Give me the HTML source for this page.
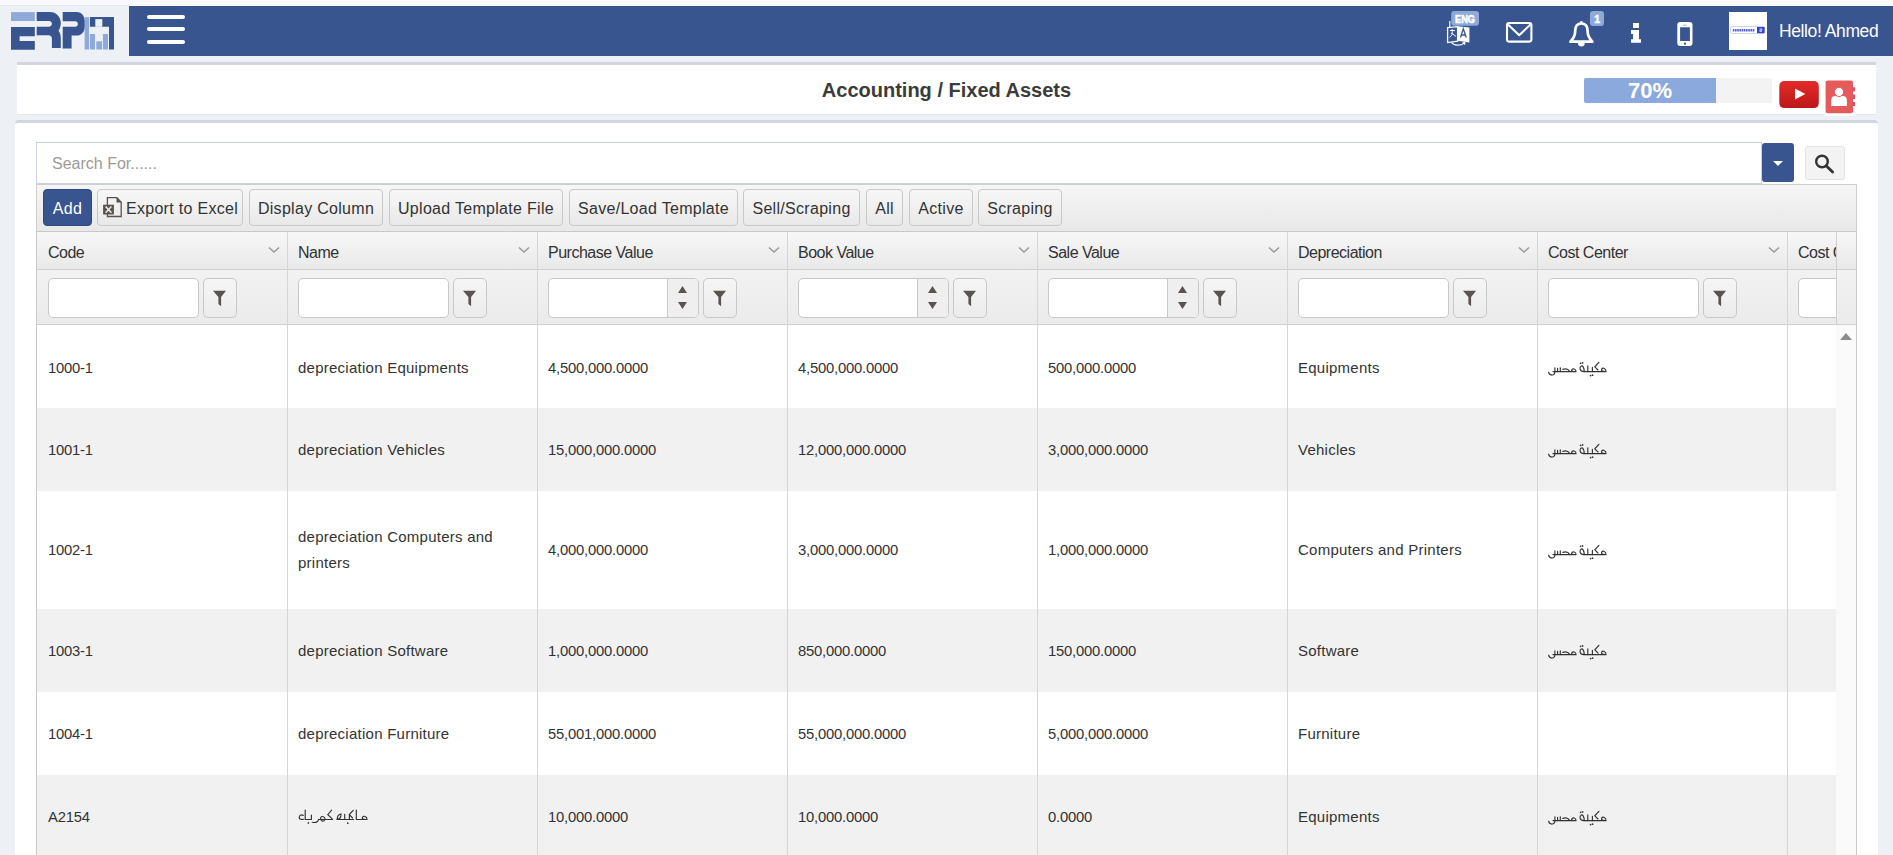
<!DOCTYPE html>
<html><head><meta charset="utf-8">
<style>
*{box-sizing:border-box;}
html,body{margin:0;padding:0;}
body{width:1893px;height:855px;overflow:hidden;position:relative;background:#edf0f5;font-family:"Liberation Sans",sans-serif;color:#333;}
.abs{position:absolute;}
#top{left:0;top:0;width:1893px;height:6px;background:#f9f9fd;}
#logoarea{left:0;top:5px;width:129px;height:51px;background:#edf0f4;border-top:1px solid #e3e6ec;}
#nav{left:129px;top:6px;width:1764px;height:50px;background:#38558f;}
.hb{position:absolute;left:18px;width:38px;height:4.4px;background:#fff;border-radius:2.2px;}
#hdr{left:17px;top:62px;width:1859px;height:53px;background:#fff;border-top:3px solid #d1d5de;border-bottom:1px solid #e2e5ea;}
#title{left:0;width:1893px;top:79px;text-align:center;font-weight:bold;font-size:20px;color:#3b3b3b;}
#sec{left:15px;top:120px;width:1863px;height:760px;background:#fff;border-top:3px solid #d1d5de;border-radius:4px 4px 0 0;}
#search{left:36px;top:142px;width:1726px;height:42px;border:1px solid #cad2df;background:#fff;}
#ph{left:52px;top:155px;font-size:16px;color:#9d9a96;}
#dd{left:1762px;top:143px;width:32px;height:39px;background:#38558f;border-radius:3px;}
#sbtn{left:1805px;top:146px;width:40px;height:34px;background:#f3f3f3;border:1px solid #e3e3e3;border-radius:3px;}
#tb{left:36px;top:184px;width:1821px;height:48px;border:1px solid #cfcfcf;background:linear-gradient(#f6f6f6,#e9e8e8);}
.btn{position:absolute;top:189px;height:37px;border:1px solid #c9c9c9;border-radius:4px;background:linear-gradient(#f7f7f7,#e9e9e9);font-size:16px;color:#333;line-height:35px;text-align:center;white-space:nowrap;}
#tblwrap{left:0;top:0;width:1893px;height:855px;}
#thead{left:37px;top:232px;width:1819px;height:38px;background:linear-gradient(#f7f7f7,#e9e9e9);border-bottom:1px solid #cfcfcf;}
#frow{left:37px;top:270px;width:1819px;height:55px;background:linear-gradient(#f2f2f2,#ebebeb);border-bottom:1px solid #cfcfcf;}
.vb{top:232px;width:1px;height:623px;background:#d6d6d6;}
#clipline{left:1836px;top:232px;width:1px;height:92px;background:#d0d0d0;}
#scrolltrack{left:1836px;top:325px;width:20px;height:530px;background:#fafafa;}
#scrollup{left:1840px;top:333px;width:0;height:0;border-left:6.5px solid transparent;border-right:6.5px solid transparent;border-bottom:7px solid #8c8c8c;}
#tblborder{left:36px;top:231px;width:1821px;height:640px;border:1px solid #c9c9c9;}
.th{top:244px;font-size:16px;letter-spacing:-0.5px;color:#333;white-space:nowrap;}
.chev{top:246px;}
.finp{top:278px;width:151px;height:40px;background:#fff;border:1px solid #c8c8c8;border-radius:5px;}
.spin{top:279px;width:31px;height:38px;background:#efefef;border-left:1px solid #c8c8c8;border-radius:0 4px 4px 0;}
.spin svg{position:absolute;left:-1px;top:-1px;}
.fbtn{top:278px;width:34px;height:40px;background:linear-gradient(#f5f5f5,#ececec);border:1px solid #c8c8c8;border-radius:5px;}
.fbtn svg{position:absolute;left:-1px;top:-1px;}
.td{font-size:14.5px;color:#333;white-space:nowrap;}
.ar{width:0;height:0;}
.ar svg{overflow:visible;}
#hclip{left:0;top:0;width:1836px;height:330px;overflow:hidden;}
.td{font-size:15px;letter-spacing:0.25px;margin-top:0;}
.td.num{font-size:14.8px;letter-spacing:-0.2px;margin-top:0;}
#hello{left:1779px;top:21px;font-size:17.5px;letter-spacing:-0.4px;color:#fff;white-space:nowrap;}
#prog{left:1584px;top:78px;width:188px;height:25px;background:#f3f3f3;border-radius:2px;}
#progfill{position:absolute;left:0;top:0;width:132px;height:25px;background:#8ba9dc;border-radius:2px 0 0 2px;}
#progtxt{position:absolute;left:0;top:0;width:132px;text-align:center;font-weight:bold;font-size:22px;color:#fff;}
.btn{font-size:16px;letter-spacing:0.3px;line-height:38px;}

</style></head>
<body>
<div class="abs" id="top"></div>
<div class="abs" id="logoarea"></div>
<svg class="abs" style="left:0;top:0" width="129" height="56" viewBox="0 0 129 56">
  <rect x="11" y="12.1" width="23.8" height="8.9" fill="#8eaadb"/>
  <path d="M11 27 H34.8 V36.2 H19.6 V41 H34.8 V49.8 H11 Z" fill="#38558f"/>
  <path fill-rule="evenodd" d="M36.7 12.1 H50 C56 12.1 60.8 17 60.8 23 C60.8 26.5 59.6 29 58.6 30.8 C59.8 32.5 60.8 35 60.8 38 V48 H51.9 V39 C51.9 36.6 50.6 35.3 48.4 35.3 H36.7 Z M36.7 21 H49 C50.7 21 51.9 22.3 51.9 23.85 C51.9 25.4 50.7 26.7 49 26.7 H36.7 Z" fill="#38558f"/>
  <path fill-rule="evenodd" d="M62.7 12.1 H77 C81.6 12.1 84.9 16.4 84.9 22 V26 C84.9 31.5 81.6 35.6 77 35.6 H71.6 V48.6 H62.7 Z M62.7 21.3 H75.3 C76.8 21.3 77.9 22.5 77.9 24 C77.9 25.5 76.8 26.7 75.3 26.7 H62.7 Z" fill="#38558f"/>
  <rect x="84.6" y="17.2" width="4.4" height="32.3" fill="#8eaadb"/>
  <path d="M89.9 16.9 H114 V49.5 H109 V26.7 H89.9 Z" fill="#38558f"/>
  <rect x="95.3" y="19.1" width="7" height="7.7" fill="#edf0f4"/>
  <rect x="89.9" y="34" width="5.1" height="15.5" fill="#8eaadb"/>
  <rect x="96.3" y="41.3" width="5.7" height="8.2" fill="#8eaadb"/>
  <rect x="102.9" y="34" width="5.1" height="15.5" fill="#8eaadb"/>
</svg>
<div class="abs" id="nav">
  <div class="hb" style="top:9px"></div>
  <div class="hb" style="top:21px"></div>
  <div class="hb" style="top:34px"></div>
</div>
<svg class="abs" style="left:1400px;top:0" width="493" height="56" viewBox="1400 0 493 56">
  <!-- translate icon -->
  <path d="M1449.8 21 V27.5" stroke="#fff" stroke-width="1.2" fill="none"/>
  <path d="M1447.6 27.6 L1457.6 26.6 V41.2 L1447.6 42.6 Z" fill="none" stroke="#fff" stroke-width="1.3"/>
  <path d="M1457.4 26.2 L1469.4 27.4 V42.4 L1457.4 40.8 Z" fill="#fff"/>
  <path d="M1460.5 37.5 L1463.3 28.8 L1466.3 37.5 M1461.3 35 H1465.4" stroke="#38558f" stroke-width="1.3" fill="none"/>
  <path d="M1450 30.5 H1455 M1452 29 C1452.5 32 1453 35 1449.5 37.6 M1451 33 C1453 34 1455 35.5 1456 36.5" stroke="#fff" stroke-width="1" fill="none"/>
  <path d="M1451.5 42.5 C1454 46 1461 46 1464.5 42.8 M1462.5 43 L1464.8 42.4 L1464.6 44.8" stroke="#fff" stroke-width="1.1" fill="none"/>
  <rect x="1451.2" y="10.9" width="27.8" height="14.8" rx="3" fill="#8eaadb"/>
  <text x="1465" y="22.7" text-anchor="middle" font-family="Liberation Sans" font-weight="bold" font-size="10" fill="#fff" stroke="#fff" stroke-width="0.5" textLength="20" lengthAdjust="spacingAndGlyphs">ENG</text>
  <!-- envelope -->
  <rect x="1507" y="23" width="24.4" height="18.6" rx="2" fill="none" stroke="#fff" stroke-width="2.1"/>
  <path d="M1508 24.5 L1519.2 35.2 L1530.4 24.5" fill="none" stroke="#fff" stroke-width="2.1" stroke-linejoin="round"/>
  <!-- bell -->
  <path d="M1570.4 41.7 C1573.6 38.5 1575.2 35.5 1575.2 31 C1575.2 25.8 1577.8 23.5 1581.4 23.5 C1585 23.5 1587.6 25.8 1587.6 31 C1587.6 35.5 1589.2 38.5 1592.4 41.7 Z" fill="none" stroke="#fff" stroke-width="2.7" stroke-linejoin="round"/>
  <circle cx="1581.4" cy="22.4" r="1.4" fill="#fff"/>
  <path d="M1578 43 A3.4 3.4 0 0 0 1584.8 43 Z" fill="#fff"/>
  <rect x="1590" y="10.9" width="14" height="15" rx="3" fill="#8eaadb"/>
  <text x="1597.2" y="23" text-anchor="middle" font-family="Liberation Sans" font-weight="bold" font-size="10.5" fill="#fff" stroke="#fff" stroke-width="0.5">1</text>
  <!-- info -->
  <rect x="1633" y="23" width="6" height="5" fill="#fff"/>
  <path d="M1631 30.1 H1639 V39.2 H1641 V42.7 H1631 V39.2 H1633 V34 H1631 Z" fill="#fff"/>
  <!-- phone -->
  <path fill-rule="evenodd" d="M1680.3 21.9 H1689.5 Q1692.5 21.9 1692.5 24.9 V43 Q1692.5 46 1689.5 46 H1680.3 Q1677.3 46 1677.3 43 V24.9 Q1677.3 21.9 1680.3 21.9 Z M1680.1 27.3 V41 H1689.9 V27.3 Z M1685 42.6 A1.1 1.1 0 1 0 1685 44.8 A1.1 1.1 0 1 0 1685 42.6 Z" fill="#fff"/>
  <path d="M1683.2 25.2 H1686.8" stroke="#8a9cc0" stroke-width="0.8"/>
  <!-- avatar -->
  <rect x="1729" y="12" width="38" height="38" fill="#fff"/>
  <rect x="1730.6" y="26.5" width="34" height="7" rx="1.5" fill="none" stroke="#c9cdf2" stroke-width="0.9"/>
  <rect x="1757" y="27" width="7.6" height="6.2" fill="#3344cc"/>
  <path d="M1732.8 30.2 H1755" stroke="#5560d0" stroke-width="2.4" stroke-dasharray="1.6 0.6"/>
  <path d="M1759.5 29 H1762 V30.2 H1759.8 V31.4 H1762" stroke="#fff" stroke-width="0.7" fill="none"/>
</svg>
<div class="abs" id="hello">Hello! Ahmed</div>
<div class="abs" id="hdr"></div>
<div class="abs" id="title">Accounting / Fixed Assets</div>
<div class="abs" id="prog"><div id="progfill"></div><div id="progtxt">70%</div></div>
<svg class="abs" style="left:1770px;top:72px" width="100" height="48" viewBox="1770 72 100 48">
  <defs><linearGradient id="yt" x1="0" y1="0" x2="0" y2="1"><stop offset="0" stop-color="#e42b28"/><stop offset="1" stop-color="#bb171b"/></linearGradient></defs>
  <path d="M1784.5 81 H1813.6 Q1818.8 81 1818.8 86.5 V102.4 Q1818.8 107.9 1813.6 107.9 H1784.5 Q1779.3 107.9 1779.3 102.4 V86.5 Q1779.3 81 1784.5 81 Z" fill="url(#yt)"/>
  <path d="M1795 88.6 L1805.3 94 L1795 99.5 Z" fill="#fff"/>
  <rect x="1824" y="78" width="32" height="38" fill="#fff"/>
  <rect x="1825.6" y="80.4" width="27.4" height="32.9" rx="2" fill="#e55a5a"/>
  <rect x="1852.4" y="87.2" width="2.6" height="4.2" fill="#e0506a"/>
  <rect x="1852.4" y="94.5" width="2.6" height="4.5" fill="#e0506a"/>
  <rect x="1852.4" y="102" width="2.6" height="4" fill="#e0506a"/>
  <path d="M1831.2 106 V100.5 Q1831.2 96.1 1835.6 96.1 H1842.5 Q1846.9 96.1 1846.9 100.5 V106 Z" fill="#fff"/>
  <circle cx="1839" cy="91.9" r="4.6" fill="#fff" stroke="#e55a5a" stroke-width="1"/>
</svg>
<div class="abs" id="sec"></div>
<div class="abs" id="search"></div>
<div class="abs" id="ph">Search For......</div>
<div class="abs" id="dd"><svg width="32" height="39" viewBox="0 0 32 39"><path d="M11 18 H21 L16 23 Z" fill="#fff"/></svg></div>
<div class="abs" id="sbtn"><svg width="40" height="34" viewBox="1805 146 40 34" style="position:absolute;left:-1px;top:-1px"><circle cx="1822" cy="161.5" r="5.8" fill="none" stroke="#333" stroke-width="2.4"/><path d="M1826.2 165.8 L1832.6 172" stroke="#333" stroke-width="2.8" stroke-linecap="round"/></svg></div>
<div class="abs" id="tb"></div>
<div class="btn" style="left:43px;width:49px;background:#38558f;border-color:#2f4a80;color:#fff;">Add</div>
<div class="btn" style="left:97px;width:146px;padding-left:24px;">Export to Excel</div>
<svg class="abs" style="left:95px;top:186px" width="40" height="42" viewBox="95 186 40 42">
  <path d="M107.4 197.6 H116.8 L121.2 202.2 V216.5 H107.4 Z" fill="none" stroke="#5b5250" stroke-width="1.3"/>
  <path d="M116.5 197 L122 202.6 H116.5 Z" fill="#5b5250"/>
  <rect x="103.1" y="204.7" width="10.8" height="9.8" fill="#5b5250"/>
  <path d="M105.6 206.5 L111.4 212.8 M111.4 206.5 L105.6 212.8" stroke="#e8e8e8" stroke-width="1.6"/>
</svg>
<div class="btn" style="left:249px;width:134px;">Display Column</div>
<div class="btn" style="left:389px;width:174px;">Upload Template File</div>
<div class="btn" style="left:569px;width:169px;">Save/Load Template</div>
<div class="btn" style="left:743px;width:117px;">Sell/Scraping</div>
<div class="btn" style="left:866px;width:37px;">All</div>
<div class="btn" style="left:909px;width:64px;">Active</div>
<div class="btn" style="left:978px;width:84px;">Scraping</div>

<div class="abs" id="tblwrap">
<div class="abs" style="left:37px;top:325px;width:1799px;height:83px;background:#fff"></div>
<div class="abs" style="left:37px;top:408px;width:1799px;height:83px;background:#f1f1f1"></div>
<div class="abs" style="left:37px;top:491px;width:1799px;height:118px;background:#fff"></div>
<div class="abs" style="left:37px;top:609px;width:1799px;height:83px;background:#f1f1f1"></div>
<div class="abs" style="left:37px;top:692px;width:1799px;height:83px;background:#fff"></div>
<div class="abs" style="left:37px;top:775px;width:1799px;height:83px;background:#f1f1f1"></div>
<div class="abs" id="thead"></div>
<div class="abs" id="frow"></div>
<div class="abs vb" style="left:287px"></div>
<div class="abs vb" style="left:537px"></div>
<div class="abs vb" style="left:787px"></div>
<div class="abs vb" style="left:1037px"></div>
<div class="abs vb" style="left:1287px"></div>
<div class="abs vb" style="left:1537px"></div>
<div class="abs vb" style="left:1787px"></div>
<div class="abs" id="clipline"></div>
<div class="abs" id="scrolltrack"></div>
<div class="abs" id="scrollup"></div>
<div class="abs" id="hclip">
<div class="abs th" style="left:48px">Code</div>
<svg class="abs chev" style="left:268px" width="12" height="8" viewBox="0 0 12 8"><path d="M1 1.5 L6 6 L11 1.5" fill="none" stroke="#9a9a9a" stroke-width="1.5"/></svg>
<div class="abs finp" style="left:48px"></div>
<div class="abs fbtn" style="left:203px"><svg width="33" height="40" viewBox="0 0 33 40"><path d="M10 12.8 H23 L18.1 19 V28.3 L15.4 26 V19 Z" fill="#5a5350"/></svg></div>
<div class="abs th" style="left:298px">Name</div>
<svg class="abs chev" style="left:518px" width="12" height="8" viewBox="0 0 12 8"><path d="M1 1.5 L6 6 L11 1.5" fill="none" stroke="#9a9a9a" stroke-width="1.5"/></svg>
<div class="abs finp" style="left:298px"></div>
<div class="abs fbtn" style="left:453px"><svg width="33" height="40" viewBox="0 0 33 40"><path d="M10 12.8 H23 L18.1 19 V28.3 L15.4 26 V19 Z" fill="#5a5350"/></svg></div>
<div class="abs th" style="left:548px">Purchase Value</div>
<svg class="abs chev" style="left:768px" width="12" height="8" viewBox="0 0 12 8"><path d="M1 1.5 L6 6 L11 1.5" fill="none" stroke="#9a9a9a" stroke-width="1.5"/></svg>
<div class="abs finp" style="left:548px"></div>
<div class="abs spin" style="left:667px"><svg width="31" height="40" viewBox="0 0 31 40"><path d="M11 15 L15.5 8 L20 15Z M11 24 L15.5 31 L20 24Z" fill="#5a5350"/></svg></div>
<div class="abs fbtn" style="left:703px"><svg width="33" height="40" viewBox="0 0 33 40"><path d="M10 12.8 H23 L18.1 19 V28.3 L15.4 26 V19 Z" fill="#5a5350"/></svg></div>
<div class="abs th" style="left:798px">Book Value</div>
<svg class="abs chev" style="left:1018px" width="12" height="8" viewBox="0 0 12 8"><path d="M1 1.5 L6 6 L11 1.5" fill="none" stroke="#9a9a9a" stroke-width="1.5"/></svg>
<div class="abs finp" style="left:798px"></div>
<div class="abs spin" style="left:917px"><svg width="31" height="40" viewBox="0 0 31 40"><path d="M11 15 L15.5 8 L20 15Z M11 24 L15.5 31 L20 24Z" fill="#5a5350"/></svg></div>
<div class="abs fbtn" style="left:953px"><svg width="33" height="40" viewBox="0 0 33 40"><path d="M10 12.8 H23 L18.1 19 V28.3 L15.4 26 V19 Z" fill="#5a5350"/></svg></div>
<div class="abs th" style="left:1048px">Sale Value</div>
<svg class="abs chev" style="left:1268px" width="12" height="8" viewBox="0 0 12 8"><path d="M1 1.5 L6 6 L11 1.5" fill="none" stroke="#9a9a9a" stroke-width="1.5"/></svg>
<div class="abs finp" style="left:1048px"></div>
<div class="abs spin" style="left:1167px"><svg width="31" height="40" viewBox="0 0 31 40"><path d="M11 15 L15.5 8 L20 15Z M11 24 L15.5 31 L20 24Z" fill="#5a5350"/></svg></div>
<div class="abs fbtn" style="left:1203px"><svg width="33" height="40" viewBox="0 0 33 40"><path d="M10 12.8 H23 L18.1 19 V28.3 L15.4 26 V19 Z" fill="#5a5350"/></svg></div>
<div class="abs th" style="left:1298px">Depreciation</div>
<svg class="abs chev" style="left:1518px" width="12" height="8" viewBox="0 0 12 8"><path d="M1 1.5 L6 6 L11 1.5" fill="none" stroke="#9a9a9a" stroke-width="1.5"/></svg>
<div class="abs finp" style="left:1298px"></div>
<div class="abs fbtn" style="left:1453px"><svg width="33" height="40" viewBox="0 0 33 40"><path d="M10 12.8 H23 L18.1 19 V28.3 L15.4 26 V19 Z" fill="#5a5350"/></svg></div>
<div class="abs th" style="left:1548px">Cost Center</div>
<svg class="abs chev" style="left:1768px" width="12" height="8" viewBox="0 0 12 8"><path d="M1 1.5 L6 6 L11 1.5" fill="none" stroke="#9a9a9a" stroke-width="1.5"/></svg>
<div class="abs finp" style="left:1548px"></div>
<div class="abs fbtn" style="left:1703px"><svg width="33" height="40" viewBox="0 0 33 40"><path d="M10 12.8 H23 L18.1 19 V28.3 L15.4 26 V19 Z" fill="#5a5350"/></svg></div>
<div class="abs th" style="left:1798px">Cost C</div>
<div class="abs finp" style="left:1798px"></div>
</div>
<div class="abs td num" style="left:48px;top:354.5px;line-height:26px">1000-1</div>
<div class="abs td" style="left:298px;top:354.5px;line-height:26px">depreciation Equipments</div>
<div class="abs td num" style="left:548px;top:354.5px;line-height:26px">4,500,000.0000</div>
<div class="abs td num" style="left:798px;top:354.5px;line-height:26px">4,500,000.0000</div>
<div class="abs td num" style="left:1048px;top:354.5px;line-height:26px">500,000.0000</div>
<div class="abs td" style="left:1298px;top:354.5px;line-height:26px">Equipments</div>
<div class="abs ar" style="left:0px;top:1.0px"><svg width="62" height="24" viewBox="1547 354 62 24" style="position:absolute;left:1547px;top:354px"><g fill="none" stroke="#333" stroke-width="1.15" stroke-linecap="round"><path d="M1584 370.6 H1606 C1606.3 367.2 1602.5 366.3 1601.6 368.3 C1600.9 370 1603 370.6 1605 370.6"/><path d="M1598.9 361.3 L1594.8 365.8 L1598 369"/><path d="M1592.4 370.6 V366.3 M1587.8 370.6 V364.8"/><path d="M1584.2 370.6 C1584.3 366.5 1582.6 364.6 1581.3 365 C1579.5 365.8 1579 370.6 1584 370.6"/><path d="M1553 370.6 H1576 C1576.3 367.8 1572.4 367 1571.7 369 C1571.2 370.4 1573 370.6 1575 370.6"/><path d="M1569.6 370.4 C1568.2 368 1565.5 367.4 1562.8 368.4"/><path d="M1560.3 370.6 V366.8 M1557.6 370.6 V367.3 M1554.9 370.6 V366.8"/><path d="M1554.9 370.8 C1555.2 374.8 1549.4 375.3 1548.6 371.2"/></g><g fill="#333"><circle cx="1590.6" cy="374.6" r="0.85"/><circle cx="1592.6" cy="374.2" r="0.85"/><circle cx="1580.6" cy="362.3" r="0.85"/><circle cx="1582.6" cy="361.9" r="0.85"/></g></svg></div>
<div class="abs td num" style="left:48px;top:436.5px;line-height:26px">1001-1</div>
<div class="abs td" style="left:298px;top:436.5px;line-height:26px">depreciation Vehicles</div>
<div class="abs td num" style="left:548px;top:436.5px;line-height:26px">15,000,000.0000</div>
<div class="abs td num" style="left:798px;top:436.5px;line-height:26px">12,000,000.0000</div>
<div class="abs td num" style="left:1048px;top:436.5px;line-height:26px">3,000,000.0000</div>
<div class="abs td" style="left:1298px;top:436.5px;line-height:26px">Vehicles</div>
<div class="abs ar" style="left:0px;top:83.0px"><svg width="62" height="24" viewBox="1547 354 62 24" style="position:absolute;left:1547px;top:354px"><g fill="none" stroke="#333" stroke-width="1.15" stroke-linecap="round"><path d="M1584 370.6 H1606 C1606.3 367.2 1602.5 366.3 1601.6 368.3 C1600.9 370 1603 370.6 1605 370.6"/><path d="M1598.9 361.3 L1594.8 365.8 L1598 369"/><path d="M1592.4 370.6 V366.3 M1587.8 370.6 V364.8"/><path d="M1584.2 370.6 C1584.3 366.5 1582.6 364.6 1581.3 365 C1579.5 365.8 1579 370.6 1584 370.6"/><path d="M1553 370.6 H1576 C1576.3 367.8 1572.4 367 1571.7 369 C1571.2 370.4 1573 370.6 1575 370.6"/><path d="M1569.6 370.4 C1568.2 368 1565.5 367.4 1562.8 368.4"/><path d="M1560.3 370.6 V366.8 M1557.6 370.6 V367.3 M1554.9 370.6 V366.8"/><path d="M1554.9 370.8 C1555.2 374.8 1549.4 375.3 1548.6 371.2"/></g><g fill="#333"><circle cx="1590.6" cy="374.6" r="0.85"/><circle cx="1592.6" cy="374.2" r="0.85"/><circle cx="1580.6" cy="362.3" r="0.85"/><circle cx="1582.6" cy="361.9" r="0.85"/></g></svg></div>
<div class="abs td num" style="left:48px;top:537.0px;line-height:26px">1002-1</div>
<div class="abs td" style="left:298px;top:524.0px;line-height:26px">depreciation Computers and<br>printers</div>
<div class="abs td num" style="left:548px;top:537.0px;line-height:26px">4,000,000.0000</div>
<div class="abs td num" style="left:798px;top:537.0px;line-height:26px">3,000,000.0000</div>
<div class="abs td num" style="left:1048px;top:537.0px;line-height:26px">1,000,000.0000</div>
<div class="abs td" style="left:1298px;top:537.0px;line-height:26px">Computers and Printers</div>
<div class="abs ar" style="left:0px;top:183.5px"><svg width="62" height="24" viewBox="1547 354 62 24" style="position:absolute;left:1547px;top:354px"><g fill="none" stroke="#333" stroke-width="1.15" stroke-linecap="round"><path d="M1584 370.6 H1606 C1606.3 367.2 1602.5 366.3 1601.6 368.3 C1600.9 370 1603 370.6 1605 370.6"/><path d="M1598.9 361.3 L1594.8 365.8 L1598 369"/><path d="M1592.4 370.6 V366.3 M1587.8 370.6 V364.8"/><path d="M1584.2 370.6 C1584.3 366.5 1582.6 364.6 1581.3 365 C1579.5 365.8 1579 370.6 1584 370.6"/><path d="M1553 370.6 H1576 C1576.3 367.8 1572.4 367 1571.7 369 C1571.2 370.4 1573 370.6 1575 370.6"/><path d="M1569.6 370.4 C1568.2 368 1565.5 367.4 1562.8 368.4"/><path d="M1560.3 370.6 V366.8 M1557.6 370.6 V367.3 M1554.9 370.6 V366.8"/><path d="M1554.9 370.8 C1555.2 374.8 1549.4 375.3 1548.6 371.2"/></g><g fill="#333"><circle cx="1590.6" cy="374.6" r="0.85"/><circle cx="1592.6" cy="374.2" r="0.85"/><circle cx="1580.6" cy="362.3" r="0.85"/><circle cx="1582.6" cy="361.9" r="0.85"/></g></svg></div>
<div class="abs td num" style="left:48px;top:637.5px;line-height:26px">1003-1</div>
<div class="abs td" style="left:298px;top:637.5px;line-height:26px">depreciation Software</div>
<div class="abs td num" style="left:548px;top:637.5px;line-height:26px">1,000,000.0000</div>
<div class="abs td num" style="left:798px;top:637.5px;line-height:26px">850,000.0000</div>
<div class="abs td num" style="left:1048px;top:637.5px;line-height:26px">150,000.0000</div>
<div class="abs td" style="left:1298px;top:637.5px;line-height:26px">Software</div>
<div class="abs ar" style="left:0px;top:284.0px"><svg width="62" height="24" viewBox="1547 354 62 24" style="position:absolute;left:1547px;top:354px"><g fill="none" stroke="#333" stroke-width="1.15" stroke-linecap="round"><path d="M1584 370.6 H1606 C1606.3 367.2 1602.5 366.3 1601.6 368.3 C1600.9 370 1603 370.6 1605 370.6"/><path d="M1598.9 361.3 L1594.8 365.8 L1598 369"/><path d="M1592.4 370.6 V366.3 M1587.8 370.6 V364.8"/><path d="M1584.2 370.6 C1584.3 366.5 1582.6 364.6 1581.3 365 C1579.5 365.8 1579 370.6 1584 370.6"/><path d="M1553 370.6 H1576 C1576.3 367.8 1572.4 367 1571.7 369 C1571.2 370.4 1573 370.6 1575 370.6"/><path d="M1569.6 370.4 C1568.2 368 1565.5 367.4 1562.8 368.4"/><path d="M1560.3 370.6 V366.8 M1557.6 370.6 V367.3 M1554.9 370.6 V366.8"/><path d="M1554.9 370.8 C1555.2 374.8 1549.4 375.3 1548.6 371.2"/></g><g fill="#333"><circle cx="1590.6" cy="374.6" r="0.85"/><circle cx="1592.6" cy="374.2" r="0.85"/><circle cx="1580.6" cy="362.3" r="0.85"/><circle cx="1582.6" cy="361.9" r="0.85"/></g></svg></div>
<div class="abs td num" style="left:48px;top:720.5px;line-height:26px">1004-1</div>
<div class="abs td" style="left:298px;top:720.5px;line-height:26px">depreciation Furniture</div>
<div class="abs td num" style="left:548px;top:720.5px;line-height:26px">55,001,000.0000</div>
<div class="abs td num" style="left:798px;top:720.5px;line-height:26px">55,000,000.0000</div>
<div class="abs td num" style="left:1048px;top:720.5px;line-height:26px">5,000,000.0000</div>
<div class="abs td" style="left:1298px;top:720.5px;line-height:26px">Furniture</div>
<div class="abs td num" style="left:48px;top:803.5px;line-height:26px">A2154</div>
<div class="abs ar" style="left:0px;top:0.0px"><svg width="72" height="22" viewBox="296 806 72 22" style="position:absolute;left:296px;top:806px"><g fill="none" stroke="#333" stroke-width="1.15" stroke-linecap="round"><path d="M356.3 810 V819.5 H367 C367.3 816.2 363.3 815.4 362.4 817.4 C361.7 819 363.6 819.5 365.5 819.5"/><path d="M337 819.5 H353.6"/><path d="M353.2 810.4 L349.3 814.6 L352.6 818"/><path d="M349.4 819.5 V815.2 M344.7 819.5 V814.2"/><path d="M337.2 819.5 C337.2 816 339 814.2 341 814 C341.2 816.5 340.2 819 337.2 819.5"/><path d="M318.5 819.5 H332.6 M331.6 810.2 L327.8 814.7 L332 818.6"/><path d="M325.2 819.5 C325 816 321 815.6 320.6 818 C320.3 821 323.6 822.5 324.8 819.6"/><path d="M318.6 819.3 C318 822 315 822.8 312.2 822.3"/><path d="M305.2 810 V819.5 M311.4 819.5 V815 M305.2 819.5 H311.4"/><path d="M303.3 815.4 C301.3 814.2 299 815.5 299.2 817.6 C299.4 819.5 301.5 819.7 303.6 819.3"/></g><g fill="#333"><circle cx="347.8" cy="823.2" r="0.85"/><circle cx="308.4" cy="822.9" r="0.85"/></g></svg></div>
<div class="abs td num" style="left:548px;top:803.5px;line-height:26px">10,000.0000</div>
<div class="abs td num" style="left:798px;top:803.5px;line-height:26px">10,000.0000</div>
<div class="abs td num" style="left:1048px;top:803.5px;line-height:26px">0.0000</div>
<div class="abs td" style="left:1298px;top:803.5px;line-height:26px">Equipments</div>
<div class="abs ar" style="left:0px;top:450.0px"><svg width="62" height="24" viewBox="1547 354 62 24" style="position:absolute;left:1547px;top:354px"><g fill="none" stroke="#333" stroke-width="1.15" stroke-linecap="round"><path d="M1584 370.6 H1606 C1606.3 367.2 1602.5 366.3 1601.6 368.3 C1600.9 370 1603 370.6 1605 370.6"/><path d="M1598.9 361.3 L1594.8 365.8 L1598 369"/><path d="M1592.4 370.6 V366.3 M1587.8 370.6 V364.8"/><path d="M1584.2 370.6 C1584.3 366.5 1582.6 364.6 1581.3 365 C1579.5 365.8 1579 370.6 1584 370.6"/><path d="M1553 370.6 H1576 C1576.3 367.8 1572.4 367 1571.7 369 C1571.2 370.4 1573 370.6 1575 370.6"/><path d="M1569.6 370.4 C1568.2 368 1565.5 367.4 1562.8 368.4"/><path d="M1560.3 370.6 V366.8 M1557.6 370.6 V367.3 M1554.9 370.6 V366.8"/><path d="M1554.9 370.8 C1555.2 374.8 1549.4 375.3 1548.6 371.2"/></g><g fill="#333"><circle cx="1590.6" cy="374.6" r="0.85"/><circle cx="1592.6" cy="374.2" r="0.85"/><circle cx="1580.6" cy="362.3" r="0.85"/><circle cx="1582.6" cy="361.9" r="0.85"/></g></svg></div>
<div class="abs" id="tblborder"></div>
</div>
</body></html>
